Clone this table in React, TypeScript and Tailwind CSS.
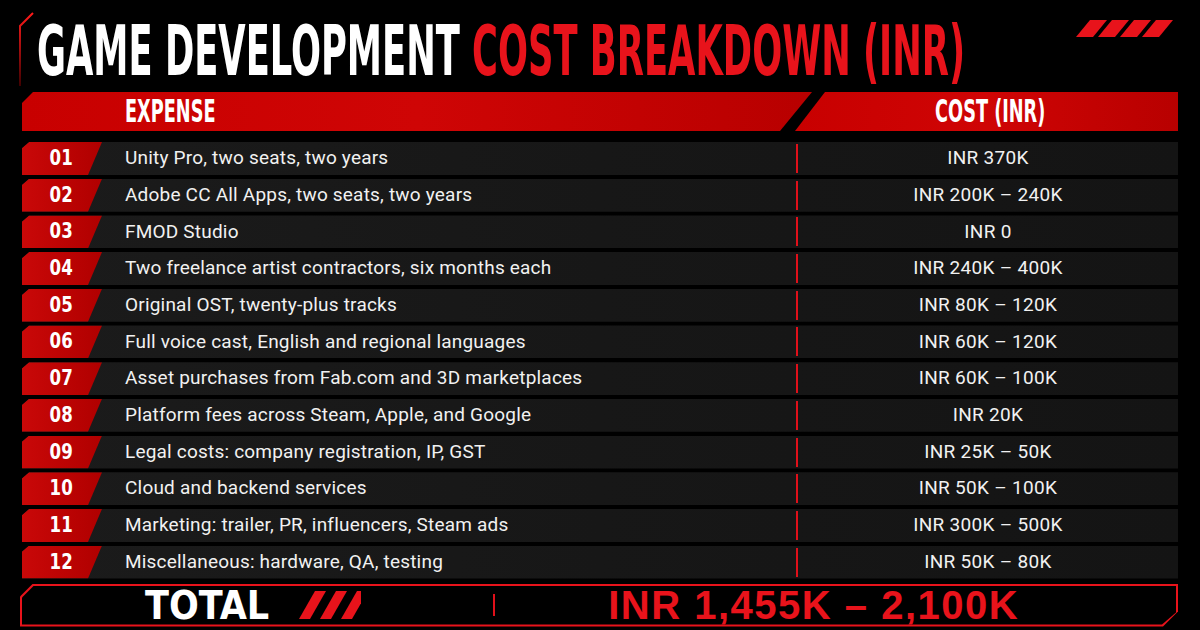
const rows: [string, string, string][] = [
  ["01", "Unity Pro, two seats, two years", "INR 370K"],
  ["02", "Adobe CC All Apps, two seats, two years", "INR 200K – 240K"],
  ["03", "FMOD Studio", "INR 0"],
  ["04", "Two freelance artist contractors, six months each", "INR 240K – 400K"],
  ["05", "Original OST, twenty-plus tracks", "INR 80K – 120K"],
  ["06", "Full voice cast, English and regional languages", "INR 60K – 120K"],
  ["07", "Asset purchases from Fab.com and 3D marketplaces", "INR 60K – 100K"],
  ["08", "Platform fees across Steam, Apple, and Google", "INR 20K"],
  ["09", "Legal costs: company registration, IP, GST", "INR 25K – 50K"],
  ["10", "Cloud and backend services", "INR 50K – 100K"],
  ["11", "Marketing: trailer, PR, influencers, Steam ads", "INR 300K – 500K"],
  ["12", "Miscellaneous: hardware, QA, testing", "INR 50K – 80K"],
];

const cond = "font-['DejaVu_Sans_Condensed',sans-serif] font-bold";

function Row({ num, label, cost }: { num: string; label: string; cost: string }) {
  return (
    <div className="flex h-[33px] items-stretch bg-gradient-to-r from-[#1b1b1b] via-[#171717] to-[#141414] [clip-path:polygon(7px_0,100%_0,100%_100%,0_100%,0_6px)]">
      <div className="flex w-[80px] items-center bg-gradient-to-r from-[#c90808] to-[#b00000] pl-[26px] [clip-path:polygon(7px_0,100%_0,calc(100%-14px)_100%,0_100%,0_6px)]">
        <span className={`${cond} scale-x-[0.88] scale-y-[1.05] text-[21px] leading-none text-white`}>{num}</span>
      </div>
      <div className="flex w-[694px] items-center pl-[23px] font-['Roboto',sans-serif] text-[19px] tracking-[0.2px] text-[#f1f1f1]">
        {label}
      </div>
      <div className="my-[2px] w-[2px] bg-[#e0101a]" />
      <div className="flex flex-1 items-center justify-center font-['Roboto',sans-serif] text-[19px] tracking-[0.3px] text-[#f1f1f1]">
        {cost}
      </div>
    </div>
  );
}

export default function App() {
  return (
    <div className="relative h-[630px] w-[1200px] overflow-hidden bg-black px-[22px]">
      <svg className="absolute left-0 top-0" width="460" height="95" viewBox="0 0 460 95">
        <defs>
          <linearGradient id="topline" x1="0" x2="1" y1="0" y2="0">
            <stop offset="0" stopColor="#ff1a1a" />
            <stop offset="0.15" stopColor="#e00000" />
            <stop offset="0.4" stopColor="#300000" />
            <stop offset="0.75" stopColor="#6a0000" />
            <stop offset="1" stopColor="#000" />
          </linearGradient>
          <linearGradient id="leftline" x1="0" x2="0" y1="0" y2="1">
            <stop offset="0" stopColor="#ff1a1a" />
            <stop offset="1" stopColor="#400000" />
          </linearGradient>
        </defs>
        <path d="M33 13 H440" stroke="url(#topline)" strokeWidth="2" fill="none" />
        <path d="M33 13 L20 26 V86" stroke="url(#leftline)" strokeWidth="2" fill="none" />
      </svg>
      <svg className="absolute left-[1076px] top-[20px]" width="100" height="18" viewBox="0 0 100 18">
        {[0, 1, 2, 3].map((i) => (
          <polygon
            key={i}
            points={`${14 + i * 22},0 ${31 + i * 22},0 ${17 + i * 22},17 ${0 + i * 22},17`}
            fill="#e8131b"
          />
        ))}
      </svg>

      <div className="flex h-[92px] items-center pl-[15px] pt-[10px]">
        <h1 className={`${cond} origin-left scale-x-[0.755] scale-y-[1.32] whitespace-nowrap text-[52px] leading-none`}>
          <span className="text-white">GAME DEVELOPMENT </span>
          <span className="text-[#e8131b]">COST BREAKDOWN (INR)</span>
        </h1>
      </div>

      <div className="flex h-[39px]">
        <div className="flex w-[790px] items-center bg-gradient-to-r from-[#c80000] via-[#cf0505] to-[#b80000] pl-[103px] [clip-path:polygon(11px_0,100%_0,calc(100%-32px)_100%,0_100%,0_11px)]">
          <span className={`${cond} origin-left scale-x-[0.82] scale-y-[1.3] text-[24px] leading-none text-white`}>EXPENSE</span>
        </div>
        <div className="-ml-[17px] flex flex-1 items-center justify-center bg-gradient-to-r from-[#c80000] via-[#cf0505] to-[#b80000] pl-[8px] [clip-path:polygon(30px_0,100%_0,100%_100%,0_100%)]">
          <span className={`${cond} scale-x-[0.82] scale-y-[1.3] text-[24px] leading-none text-white`}>COST (INR)</span>
        </div>
      </div>

      <div className="mt-[11px] flex flex-col gap-[3.7px]">
        {rows.map(([n, l, c]) => (
          <Row key={n} num={n} label={l} cost={c} />
        ))}
      </div>

      <div className="-ml-[2px] mt-[5px] h-[43px] bg-[#e8131b] p-[2px] [clip-path:polygon(13px_0,100%_0,100%_28px,calc(100%-15px)_100%,0_100%,0_13px)]">
        <div className="flex h-full items-center bg-black [clip-path:polygon(12px_0,100%_0,100%_27px,calc(100%-14px)_100%,0_100%,0_12px)]">
          <span className={`${cond} ml-[123px] text-[39px] leading-none text-white`}>TOTAL</span>
          <svg className="ml-[30px]" width="62" height="28" viewBox="0 0 62 28">
            {[0, 1, 2].map((i) => (
              <polygon
                key={i}
                points={`${16 + i * 21},0 ${27 + i * 21},0 ${11 + i * 21},28 ${0 + i * 21},28`}
                fill="#e8131b"
              />
            ))}
          </svg>
          <div className="ml-[132px] h-[22px] w-[2px] bg-[#e0101a]" />
          <span className="ml-[113px] font-['Liberation_Sans',sans-serif] text-[40px] font-bold leading-none tracking-[1.5px] text-[#e8131b]">
            INR 1,455K – 2,100K
          </span>
        </div>
      </div>
    </div>
  );
}
